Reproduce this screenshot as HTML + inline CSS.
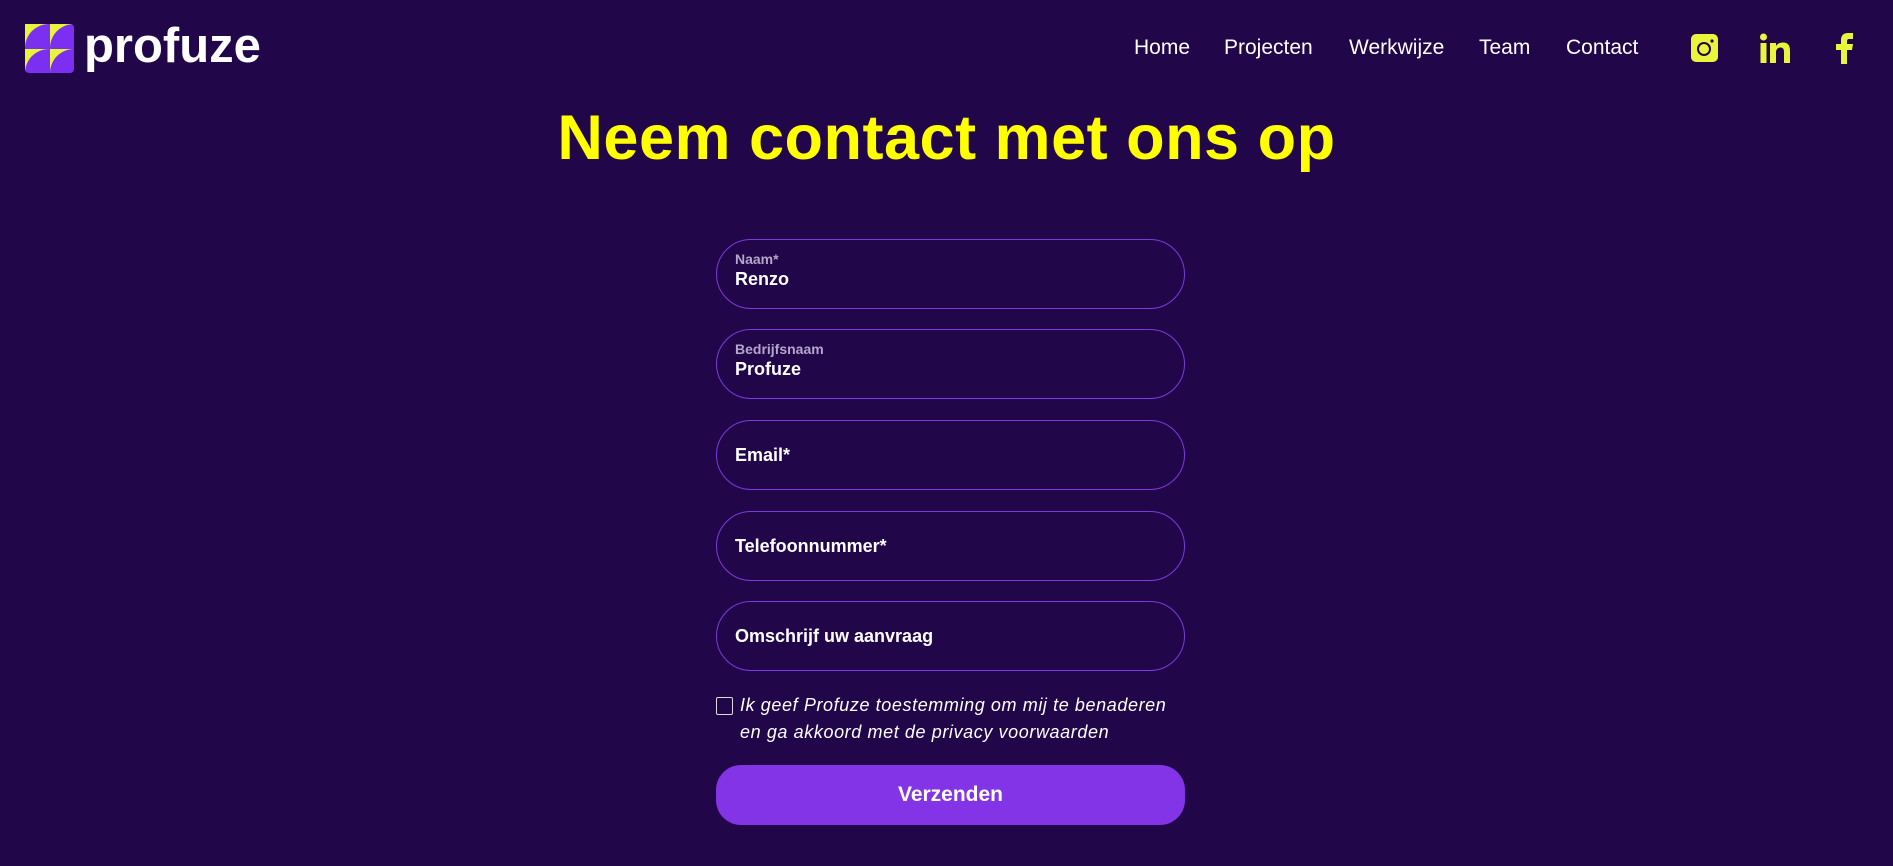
<!DOCTYPE html>
<html><head><meta charset="utf-8"><style>
*{margin:0;padding:0;box-sizing:border-box}
body{width:1893px;height:866px;background:#22064a;font-family:"Liberation Sans",sans-serif;position:relative;overflow:hidden;color:#fff}
.abs{position:absolute}
.logo-text{left:84px;top:18px;font-size:49px;font-weight:bold;letter-spacing:0px;line-height:56px}
nav a{position:absolute;top:36px;font-size:21px;color:#fff;text-decoration:none;line-height:24px}
h1{position:absolute;left:0;width:1893px;text-align:center;top:103px;font-size:63px;line-height:70px;color:#ffff00;font-weight:bold;letter-spacing:0.5px}
.field{position:absolute;left:716px;width:469px;height:70px;border:1px solid #7c3ae0;border-radius:35px}
.lbl{position:absolute;left:18px;top:11px;font-size:14px;color:#b5a6cb;font-weight:bold}
.val{position:absolute;left:18px;top:29px;font-size:18px;color:#fff;font-weight:bold}
.ph{position:absolute;left:18px;top:24px;font-size:18px;color:#fff;font-weight:bold}
.cb{left:716px;top:697px;width:17px;height:18px;border:1.5px solid #ddd;border-radius:2px}
.ct{left:740px;font-size:18px;font-style:italic;color:#fff;line-height:27px;top:692px;letter-spacing:0.6px;white-space:nowrap}
.btn{left:716px;top:765px;width:469px;height:60px;border-radius:25px;background:#8334e6;text-align:center;line-height:60px;font-size:21px;font-weight:bold}
</style></head><body>
<svg class="abs" style="left:25px;top:24px" width="49" height="49" viewBox="0 0 49 49">
<rect width="49" height="49" rx="4" fill="#7b2ff0"/>
<path d="M0 0H24V0A24 24 0 0 0 0 24Z" fill="#e8f53a"/>
<path d="M25 0H49V0A24 24 0 0 0 25 24Z" fill="#e8f53a"/>
<path d="M0 25H24A24 24 0 0 0 0 49Z" fill="#e8f53a"/>
<path d="M25 25H49A24 24 0 0 0 25 49Z" fill="#e8f53a"/>
</svg>
<div class="abs logo-text">profuze</div>
<nav>
<a style="left:1134px">Home</a>
<a style="left:1224px">Projecten</a>
<a style="left:1349px">Werkwijze</a>
<a style="left:1479px">Team</a>
<a style="left:1566px">Contact</a>
</nav>
<svg class="abs" style="left:1691px;top:34px" width="27" height="28" viewBox="0 0 27 28"><rect width="27" height="28" rx="5" fill="#e8f53a"/><circle cx="13" cy="15" r="6" fill="none" stroke="#22064a" stroke-width="2"/><circle cx="21" cy="7" r="1.6" fill="#22064a"/></svg>
<svg class="abs" style="left:1760px;top:33px" width="31" height="30" viewBox="0 0 31 30"><circle cx="3.5" cy="4" r="3.5" fill="#e8f53a"/><rect x="0.5" y="10" width="6" height="20" fill="#e8f53a"/><path d="M10 10h6v3c1.5-2.5 4-3.5 7-3.5 5 0 7 3 7 8V30h-6V19c0-3-1-4.5-3.5-4.5S16 16.5 16 19v11h-6Z" fill="#e8f53a"/></svg>
<svg class="abs" style="left:1836px;top:33px" width="17" height="31" viewBox="0 0 17 31"><path d="M5 31V17H0v-6h5V7c0-5 3-7 7-7h5v6h-3.5C11.5 6 11 7 11 8.5V11h6l-1 6h-5v14Z" fill="#e8f53a"/></svg>
<h1>Neem contact met ons op</h1>
<div class="field" style="top:239px"><div class="lbl">Naam*</div><div class="val">Renzo</div></div>
<div class="field" style="top:329px"><div class="lbl">Bedrijfsnaam</div><div class="val">Profuze</div></div>
<div class="field" style="top:420px"><div class="ph">Email*</div></div>
<div class="field" style="top:511px"><div class="ph">Telefoonnummer*</div></div>
<div class="field" style="top:601px"><div class="ph">Omschrijf uw aanvraag</div></div>
<div class="abs cb"></div>
<div class="abs ct">Ik geef Profuze toestemming om mij te benaderen<br>en ga akkoord met de privacy voorwaarden</div>
<div class="abs btn">Verzenden</div>
</body></html>
